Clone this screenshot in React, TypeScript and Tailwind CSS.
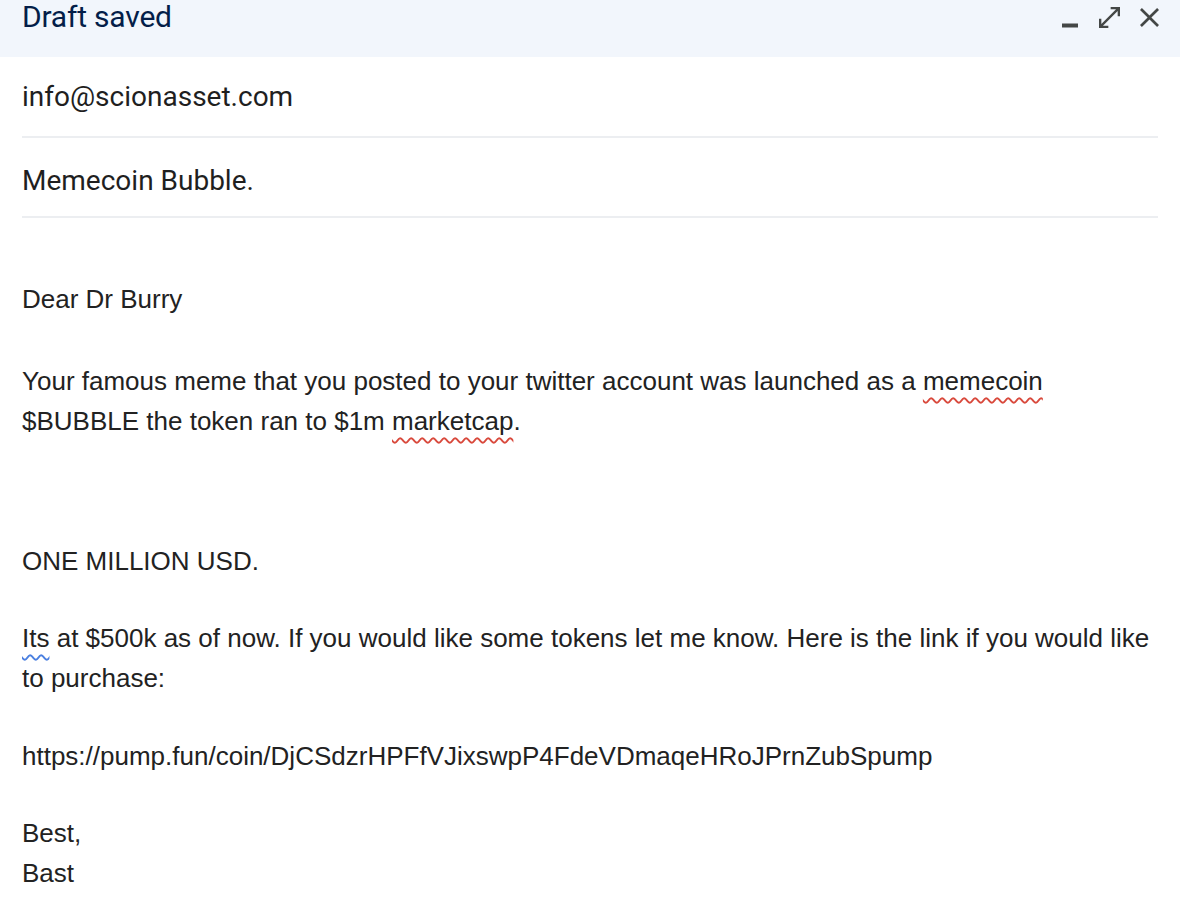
export default function App() {
  const body = "font-['Liberation_Sans',Arial,sans-serif] text-[26px] leading-[40px] text-[#222222]";
  const wavyRed = "underline decoration-wavy decoration-[#d9493c] decoration-[1.5px] underline-offset-[7px]";
  const wavyBlue = "underline decoration-wavy decoration-[#4a7fe0] decoration-[1.5px] underline-offset-[7px]";

  return (
    <div className="w-[1180px] h-[908px] bg-white overflow-hidden">
      {/* title bar */}
      <header className="flex items-start h-[57px] bg-[#f2f6fc]">
        <h1 className="pl-[22px] pt-[0px] font-['Roboto',sans-serif] text-[30px] leading-[34px] text-[#041e49] tracking-[-0.2px]">
          Draft saved
        </h1>
        <div className="ml-auto mr-[21px] flex items-start text-[#444746]">
          <svg className="mt-[23px]" width="16" height="5" viewBox="0 0 16 5">
            <rect width="16" height="4" y="0.5" fill="currentColor" />
          </svg>
          <svg className="ml-[21px] mt-[7px]" width="21" height="21" viewBox="120 -840 720 720">
            <path
              d="M120-120v-320h80v184l504-504H520v-80h320v320h-80v-184L256-200h184v80H120Z"
              fill="currentColor"
            />
          </svg>
          <svg className="ml-[20px] mt-[8px]" width="19" height="19" viewBox="200 -760 560 560">
            <path
              d="m256-200-56-56 224-224-224-224 56-56 224 224 224-224 56 56-224 224 224 224-56 56-224-224-224 224Z"
              fill="currentColor"
            />
          </svg>
        </div>
      </header>

      {/* recipient + subject */}
      <div className="px-[22px] font-['Roboto',sans-serif] text-[28px] text-[#1f1f1f]">
        <div className="h-[81px] flex items-center border-b-2 border-[#eceef1] pt-[1px]">info@scionasset.com</div>
        <div className="h-[80px] flex items-center border-b-2 border-[#eceef1] pt-[7px]">Memecoin Bubble.</div>
      </div>

      {/* message body */}
      <div className={`${body} px-[22px] pt-[61px]`}>
        <p>Dear Dr Burry</p>
        <p className="mt-[42px]">
          Your famous meme that you posted to your twitter account was launched as a{" "}
          <span className={wavyRed}>memecoin</span>
          <br />
          $BUBBLE the token ran to $1m <span className={wavyRed}>marketcap</span>.
        </p>
        <p className="mt-[100px]">ONE MILLION USD.</p>
        <p className="mt-[37px]">
          <span className={wavyBlue}>Its</span> at $500k as of now. If you would like some tokens let me know. Here
          is the link if you would like to purchase:
        </p>
        <p className="mt-[38px]">https://pump.fun/coin/DjCSdzrHPFfVJixswpP4FdeVDmaqeHRoJPrnZubSpump</p>
        <p className="mt-[37px]">
          Best,
          <br />
          Bast
        </p>
      </div>
    </div>
  );
}
